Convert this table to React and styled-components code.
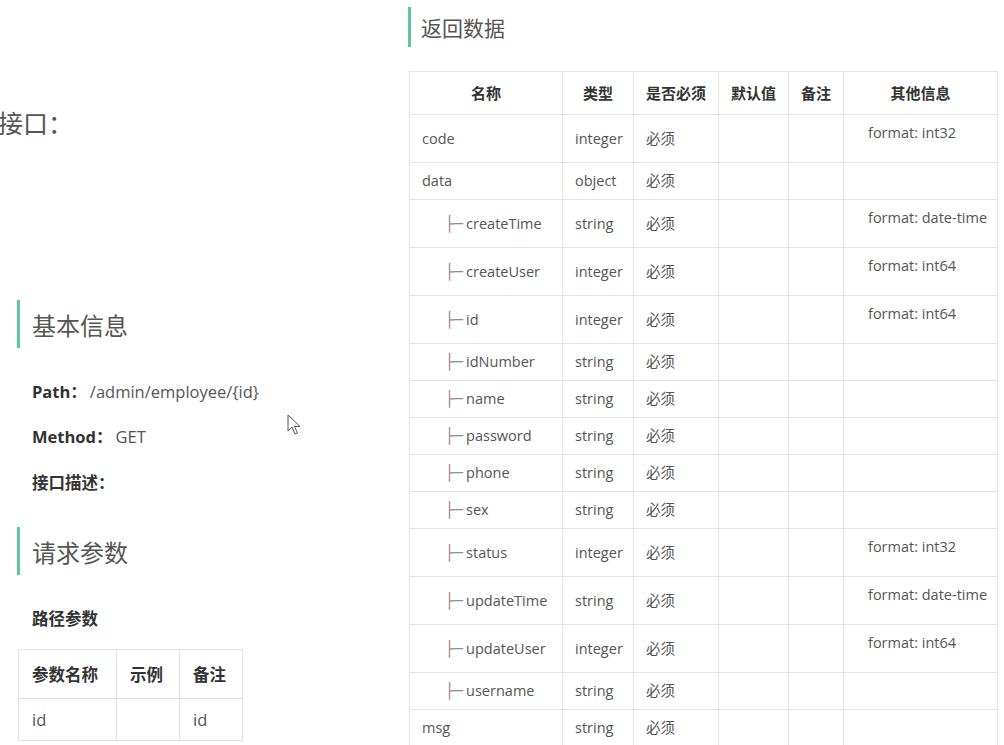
import React from 'react';
import styled, { createGlobalStyle } from 'styled-components';

const GlobalStyle = createGlobalStyle`
  html, body {
    margin: 0;
    padding: 0;
    background: #fff;
    overflow: hidden;
  }
  body {
    font-family: "Open Sans", "Noto Sans CJK SC", sans-serif;
    color: #555;
  }
`;

const Page = styled.div`
  position: relative;
  display: flex;
  width: 1004px;
  height: 745px;
  overflow: hidden;
`;

const LeftCol = styled.div`
  width: 408px;
  flex-shrink: 0;
  padding-top: 105px;
  box-sizing: border-box;
`;

const RightCol = styled.div`
  flex: 1;
  padding-top: 7px;
`;

const Intro = styled.div`
  font-size: 25px;
  line-height: 36px;
  color: #555;
  margin-left: -2px;
`;

const Heading = styled.div`
  display: flex;
  align-items: center;
  height: ${p => p.$h || 48}px;
  margin-top: ${p => p.$mt || 0}px;
  margin-left: ${p => p.$ml || 0}px;
  padding-left: ${p => p.$pl || 12}px;
  border-left: 3px solid #5cc998;
  font-size: ${p => p.$size || 24}px;
  color: #555;
`;

const InfoLine = styled.div`
  margin-top: ${p => p.$mt || 21}px;
  margin-left: 32px;
  font-size: 16.5px;
  line-height: 24px;
  color: #555;
`;

const Label = styled.b`
  color: #333;
  font-weight: 700;
  margin-right: 3px;
`;

const SmallTable = styled.table`
  margin: 18px 0 0 18px;
  border-collapse: collapse;
  table-layout: fixed;
  width: 224px;
  font-size: 16.5px;

  th, td {
    border: 1px solid #e2e2e2;
    text-align: left;
    padding: 0 13px;
    white-space: nowrap;
  }
  th {
    height: 48px;
    color: #333;
    font-weight: 700;
  }
  td {
    height: 41px;
    color: #555;
  }
`;

const DataTable = styled.table`
  margin: 24px 0 0 1px;
  border-collapse: collapse;
  table-layout: fixed;
  width: 588px;
  font-size: 14.5px;

  th, td {
    border: 1px solid #e4e4e4;
    padding: 8px 12px;
    line-height: 20px;
    white-space: nowrap;
    overflow: hidden;
  }
  th {
    padding: 11px 4px;
    text-align: center;
    font-weight: 700;
    color: #333;
    font-size: 15px;
  }
  td {
    text-align: left;
    color: #555;
  }
`;

const NameCell = styled.td`
  && {
    padding-left: ${p => (p.$child ? 35 : 12)}px;
  }
`;

const Branch = styled.span`
  font-family: "DejaVu Sans", sans-serif;
  font-size: 15px;
  color: #9c8888;
  margin-right: 3px;
`;

const InfoCell = styled.td`
  && {
    padding-left: 24px;
    vertical-align: top;
  }
`;

const InfoText = styled.div`
  padding-bottom: ${p => (p.$filled ? 11 : 0)}px;
`;

const Cursor = styled.svg`
  position: absolute;
  left: 287px;
  top: 414px;
`;

const rows = [
  { name: 'code', type: 'integer', info: 'format: int32' },
  { name: 'data', type: 'object' },
  { name: 'createTime', type: 'string', info: 'format: date-time', child: true },
  { name: 'createUser', type: 'integer', info: 'format: int64', child: true },
  { name: 'id', type: 'integer', info: 'format: int64', child: true },
  { name: 'idNumber', type: 'string', child: true },
  { name: 'name', type: 'string', child: true },
  { name: 'password', type: 'string', child: true },
  { name: 'phone', type: 'string', child: true },
  { name: 'sex', type: 'string', child: true },
  { name: 'status', type: 'integer', info: 'format: int32', child: true },
  { name: 'updateTime', type: 'string', info: 'format: date-time', child: true },
  { name: 'updateUser', type: 'integer', info: 'format: int64', child: true },
  { name: 'username', type: 'string', child: true },
  { name: 'msg', type: 'string' },
];

export default function App() {
  return (
    <>
      <GlobalStyle />
      <Page>
        <LeftCol>
          <Intro>接口：</Intro>
          <Heading $mt={159} $ml={17}>基本信息</Heading>
          <InfoLine $mt={32}>
            <Label>Path：</Label>/admin/employee/{'{id}'}
          </InfoLine>
          <InfoLine>
            <Label>Method：</Label>GET
          </InfoLine>
          <InfoLine $mt={22}>
            <Label>接口描述：</Label>
          </InfoLine>
          <Heading $mt={32} $ml={17}>请求参数</Heading>
          <InfoLine $mt={32}>
            <Label>路径参数</Label>
          </InfoLine>
          <SmallTable>
            <colgroup>
              <col style={{ width: 98 }} />
              <col style={{ width: 63 }} />
              <col style={{ width: 63 }} />
            </colgroup>
            <thead>
              <tr>
                <th>参数名称</th>
                <th>示例</th>
                <th>备注</th>
              </tr>
            </thead>
            <tbody>
              <tr>
                <td>id</td>
                <td></td>
                <td>id</td>
              </tr>
            </tbody>
          </SmallTable>
        </LeftCol>

        <RightCol>
          <Heading $h={40} $size={21} $pl={10}>返回数据</Heading>
          <DataTable>
            <colgroup>
              <col style={{ width: 153 }} />
              <col style={{ width: 71 }} />
              <col style={{ width: 85 }} />
              <col style={{ width: 70 }} />
              <col style={{ width: 55 }} />
              <col style={{ width: 154 }} />
            </colgroup>
            <thead>
              <tr>
                <th>名称</th>
                <th>类型</th>
                <th>是否必须</th>
                <th>默认值</th>
                <th>备注</th>
                <th>其他信息</th>
              </tr>
            </thead>
            <tbody>
              {rows.map(r => (
                <tr key={r.name}>
                  <NameCell $child={r.child}>
                    {r.child && <Branch>├─</Branch>}
                    {r.name}
                  </NameCell>
                  <td>{r.type}</td>
                  <td>必须</td>
                  <td></td>
                  <td></td>
                  <InfoCell>
                    <InfoText $filled={!!r.info}>{r.info}</InfoText>
                  </InfoCell>
                </tr>
              ))}
            </tbody>
          </DataTable>
        </RightCol>

        <Cursor width="14" height="22" viewBox="0 0 14 22">
          <path
            d="M1 1 L1 17 L5 13 L8 20 L10.5 19 L7.5 12.5 L13 12.5 Z"
            fill="#fff"
            stroke="#555"
            strokeWidth="1"
            strokeLinejoin="round"
          />
        </Cursor>
      </Page>
    </>
  );
}
